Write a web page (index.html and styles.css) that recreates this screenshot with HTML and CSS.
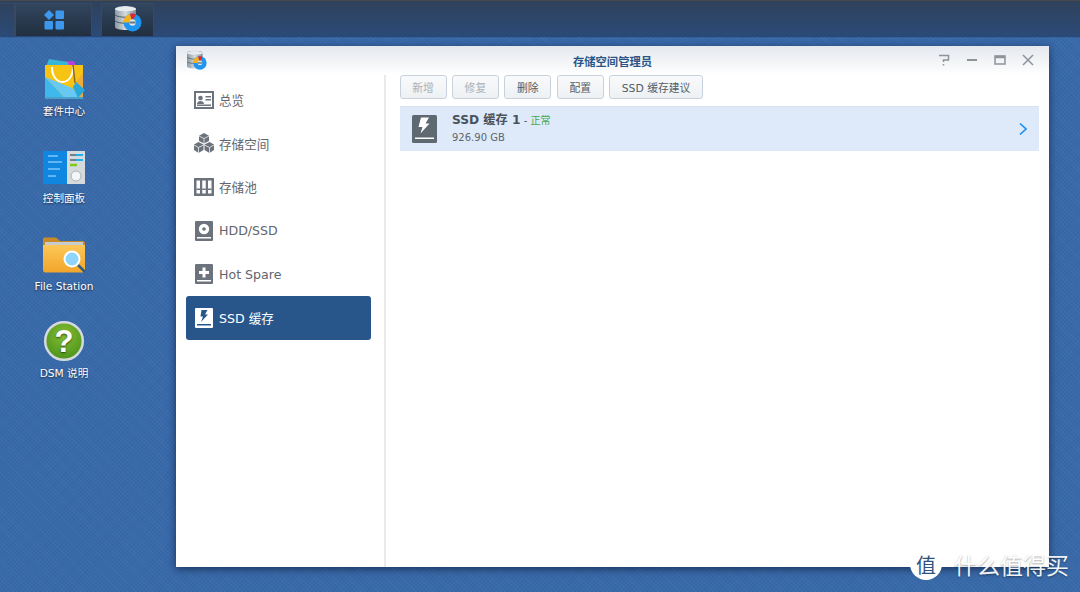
FILE: index.html
```html
<!DOCTYPE html>
<html lang="zh">
<head>
<meta charset="utf-8">
<title>存储空间管理员</title>
<link rel="stylesheet" href="styles.css">
</head>
<body>
<svg class="defs" width="0" height="0">
  <defs>
    <linearGradient id="dbg" x1="0" x2="1" y1="0" y2="0">
      <stop offset="0" stop-color="#8d99a3"/><stop offset=".5" stop-color="#d3dade"/><stop offset="1" stop-color="#7f8b95"/>
    </linearGradient>
    <linearGradient id="folderg" x1="0" x2="0" y1="0" y2="1">
      <stop offset="0" stop-color="#fcc758"/><stop offset="1" stop-color="#f2a52a"/>
    </linearGradient>
    <radialGradient id="helpg" cx=".5" cy=".35" r=".7">
      <stop offset="0" stop-color="#86bd32"/><stop offset="1" stop-color="#47901a"/>
    </radialGradient>
    <g id="dbicon">
      <path d="M0 4C0 0 21 0 21 4V22C21 26 0 26 0 22Z" fill="url(#dbg)"/>
      <path d="M0 4C0 7 21 7 21 4C21 1 0 1 0 4Z" fill="#e6ebee"/>
      <path d="M0 10C4 13 17 13 21 10M0 16C4 19 17 19 21 16" fill="none" stroke="#4f5c66" stroke-width="1"/>
      <circle cx="17.500" cy="17.500" r="9" fill="#1e96f0"/>
      <path d="M8.500 17.500A9 9 0 0 1 15 8.900L16.500 14.500A3 3 0 0 0 14.500 17.500Z" fill="#f5b21c"/>
      <path d="M15 8.800A9 9 0 0 1 21 9.200L18.500 14.500H16.500Z" fill="#e3262a"/>
      <circle cx="17.500" cy="17.500" r="3.200" fill="#dfe5e8"/>
      <rect x="14.500" y="16.500" width="6" height="2" fill="#6d7a84"/>
    </g>
  </defs>
</svg>

<header class="taskbar">
  <div class="task-slot task-spacer"></div>
  <div class="task-slot task-main">
    <svg width="22" height="20" viewBox="0 0 22 20">
      <path d="M6 0L11 5L6 10L1 5Z" fill="#3d97ec"/>
      <rect x="12.500" y="0.500" width="8.500" height="8.500" rx="1" fill="#3d97ec"/>
      <rect x="1.500" y="11" width="8.500" height="8.500" rx="1" fill="#3d97ec"/>
      <rect x="12.500" y="11" width="8.500" height="8.500" rx="1" fill="#3d97ec"/>
    </svg>
  </div>
  <div class="task-slot task-app">
    <svg width="27" height="27" viewBox="0 0 27 27"><use href="#dbicon"/></svg>
  </div>
</header>

<main class="desktop">
  <nav class="shortcuts">
    <a class="shortcut">
      <svg width="44" height="44" viewBox="0 0 44 44">
        <path d="M5 6L32 4L34 10H5Z" fill="#c23be0"/>
        <path d="M5 7L7 2L26 5L27 10H5Z" fill="#38b6d8"/>
        <path d="M3 8H41V42H3Z" fill="#f7c414"/>
        <path d="M3 20L24 42H3Z" fill="#3fb8ee"/>
        <path d="M3 20L30 31L41 42H24Z" fill="#67c8f2"/>
        <path d="M30 31L41 16V42Z" fill="#eeab3c"/>
        <path d="M3 40H41V42H3Z" fill="#4aa0c8"/>
        <path d="M10 10C10 30 31 30 31 10" fill="none" stroke="#fff" stroke-width="2"/>
        <path d="M31 8L33 26" stroke="#8a6a1f" stroke-width="1.500"/>
        <path d="M34 25L43 33L36 41L31 30Z" fill="#27a9dc"/>
      </svg>
      <span>套件中心</span>
    </a>
    <a class="shortcut">
      <svg width="44" height="44" viewBox="0 0 44 44">
        <rect x="1" y="7" width="24" height="33" fill="#0f86e0"/>
        <rect x="25" y="7" width="18" height="33" fill="#d5dadd"/>
        <path d="M6 12H16M6 18H20M6 25H18M6 32H14" stroke="#7cc6f7" stroke-width="1.500"/>
        <path d="M28 11H35M28 16H35M28 21H35" stroke="#56616b" stroke-width="1.500"/>
        <path d="M34 11H41M34 16H41" stroke="#1fb1ee" stroke-width="2"/>
        <path d="M28 21H35" stroke="#7fca1e" stroke-width="2.500"/>
        <circle cx="34" cy="32" r="5" fill="#f4f6f7" stroke="#aab2b8"/>
      </svg>
      <span>控制面板</span>
    </a>
    <a class="shortcut">
      <svg width="44" height="44" viewBox="0 0 44 44">
        <path d="M1 7C1 6 2 5.500 3 5.500H14L18 9H41C42 9 43 10 43 11V16H1Z" fill="#c98a28"/>
        <rect x="3" y="10" width="38" height="6" fill="#c9ccce"/>
        <path d="M1 13H43V38C43 39.500 42 40.500 41 40.500H3C2 40.500 1 39.500 1 38Z" fill="url(#folderg)"/>
        <path d="M36 33L43 40" stroke="#2b5f80" stroke-width="2.500"/>
        <circle cx="30" cy="27" r="7.500" fill="#8fd5fb" stroke="#fff" stroke-width="2"/>
      </svg>
      <span>File Station</span>
    </a>
    <a class="shortcut">
      <svg width="44" height="44" viewBox="0 0 44 44">
        <circle cx="22" cy="22" r="18.800" fill="url(#helpg)" stroke="#d3d9dc" stroke-width="2.500"/>
        <text x="22" y="33" class="help-mark">?</text>
      </svg>
      <span>DSM 说明</span>
    </a>
  </nav>

  <section class="window">
    <header class="titlebar">
      <svg class="title-icon" width="20" height="20" viewBox="0 0 27 27"><use href="#dbicon"/></svg>
      <h1>存储空间管理员</h1>
      <div class="win-controls">
        <svg width="12" height="12" viewBox="0 0 12 12"><path d="M1 1.500H10.500V6H5.500V8M5.500 10V11.500" fill="none" stroke="#8d9399" stroke-width="1.500"/></svg>
        <svg width="12" height="12" viewBox="0 0 12 12"><path d="M1 6H11" stroke="#8d9399" stroke-width="2"/></svg>
        <svg width="12" height="12" viewBox="0 0 12 12"><path d="M1 2H11V10H1Z" fill="none" stroke="#8d9399" stroke-width="1.500"/><path d="M1 3H11" stroke="#8d9399" stroke-width="2.500"/></svg>
        <svg width="12" height="12" viewBox="0 0 12 12"><path d="M1 1L11 11M11 1L1 11" stroke="#8d9399" stroke-width="1.500"/></svg>
      </div>
    </header>
    <div class="window-body">
      <aside class="sidebar">
        <a class="side-item">
          <svg width="20" height="18" viewBox="0 0 20 18"><path fill-rule="evenodd" d="M0 0H20V18H0ZM2 2V16H18V2Z" fill="#6c737c"/><circle cx="6.500" cy="7" r="2.300" fill="#6c737c"/><path d="M3 13C3 9 10 9 10 13ZM11.500 5H17V6.500H11.500ZM11.500 8H17V9.500H11.500ZM3 13.500H17V15H3Z" fill="#6c737c"/></svg>
          <span>总览</span>
        </a>
        <a class="side-item">
          <svg width="20" height="20" viewBox="0 0 20 20"><path d="M10 0L15 2.800V8L10 10.500L5 8V2.800Z" fill="#6c737c"/><path d="M4.500 9L9.500 11.500V17L4.500 20L0 17V11.500Z" fill="#6c737c"/><path d="M15.500 9L20 11.500V17L15.500 20L10.500 17V11.500Z" fill="#6c737c"/><path d="M5 3L10 5.500L15 3M10 5.500V10M0 12L4.500 14.500L9.500 12M4.500 14.500V20M10.500 12L15.500 14.500L20 12M15.500 14.500V20" fill="none" stroke="#fff" stroke-width=".7"/></svg>
          <span>存储空间</span>
        </a>
        <a class="side-item">
          <svg width="20" height="18" viewBox="0 0 20 18"><path fill-rule="evenodd" d="M0 0H20V18H0ZM2.500 2.500V15.500H6V2.500ZM8.250 2.500V15.500H11.750V2.500ZM14 2.500V15.500H17.500V2.500Z" fill="#6c737c"/><path d="M2.500 10.500H6V12H2.500ZM8.250 10.500H11.750V12H8.250ZM14 10.500H17.500V12H14Z" fill="#6c737c"/></svg>
          <span>存储池</span>
        </a>
        <a class="side-item drive">
          <svg width="18" height="20" viewBox="0 0 18 20"><rect width="18" height="20" rx="1" fill="#6c737c"/><circle cx="9" cy="8" r="5.200" fill="#fff"/><circle cx="9" cy="8" r="1.800" fill="#6c737c"/><rect x="2" y="16" width="14" height="1.500" fill="#fff"/></svg>
          <span>HDD/SSD</span>
        </a>
        <a class="side-item drive">
          <svg width="18" height="20" viewBox="0 0 18 20"><rect width="18" height="20" rx="1" fill="#6c737c"/><path d="M7.500 3.500H10.500V7H14V10H10.500V13.500H7.500V10H4V7H7.500Z" fill="#fff"/><rect x="2" y="16" width="14" height="1.500" fill="#fff"/></svg>
          <span>Hot Spare</span>
        </a>
        <a class="side-item drive is-active">
          <svg width="18" height="20" viewBox="0 0 18 20"><rect width="18" height="20" rx="1" fill="#fff"/><path d="M6.500 2H12.500L10 6.500H13L6 14L8 8.500H5.500Z" fill="#28568a"/><rect x="2" y="16" width="14" height="1.500" fill="#28568a"/></svg>
          <span>SSD 缓存</span>
        </a>
      </aside>
      <div class="content">
        <div class="toolbar">
          <button class="btn" disabled>新增</button>
          <button class="btn" disabled>修复</button>
          <button class="btn">删除</button>
          <button class="btn">配置</button>
          <button class="btn btn-wide">SSD 缓存建议</button>
        </div>
        <article class="cache-row">
          <svg width="25" height="28" viewBox="0 0 25 28"><rect width="25" height="28" rx="1.500" fill="#5f6972"/><path d="M9 2.500H17L13.500 8.500H17.500L8.500 18.500L10.500 12H6.500Z" fill="#fff"/><rect x="3" y="22.500" width="19" height="1.500" fill="#fff"/></svg>
          <div class="cache-text">
            <div class="cache-title"><strong>SSD 缓存 1</strong><span class="sep"> - </span><span class="status">正常</span></div>
            <div class="cache-size">926.90 GB</div>
          </div>
          <svg class="chevron" width="8" height="12" viewBox="0 0 8 12"><path d="M1 .500L7 6L1 11.500" fill="none" stroke="#1d8fee" stroke-width="1.600"/></svg>
        </article>
      </div>
    </div>
  </section>

  <div class="watermark">
    <span class="wm-badge">值</span>
    <span class="wm-text">什么值得买</span>
  </div>
</main>
</body>
</html>
```
FILE: styles.css
```css
* { box-sizing: border-box; }
html, body { height: 100%; }
body {
  margin: 0;
  width: 1080px;
  height: 592px;
  overflow: hidden;
  display: flex;
  flex-direction: column;
  font-family: "DejaVu Sans", "Noto Sans CJK SC", sans-serif;
  background-color: #3869a9;
  background-image:
    repeating-linear-gradient(45deg, rgba(255,255,255,.03) 0 1px, transparent 1px 3px),
    repeating-linear-gradient(-45deg, rgba(0,0,0,.03) 0 1px, transparent 1px 3px);
}
.defs { position: absolute; }
.taskbar {
  height: 36px;
  flex: none;
  display: flex;
  padding: 2px 0 0 0;
  gap: 9px;
  background: linear-gradient(#2f425c, #2b4a76);
  border-top: 1px solid #4a4a4c;
  box-shadow: 0 1px 1px rgba(20,40,75,.5);
}
.task-slot {
  height: 33px;
  display: flex;
  align-items: center;
  justify-content: center;
  border: 1px solid #394a60;
  border-bottom: 0;
  background: linear-gradient(#32465f, #222f40);
}
.task-spacer { width: 15px; background: none; border-left: 0; }
.task-main { width: 77px; margin-left: -9px; }
.task-app { width: 53px; }
.task-app svg { margin-top: -3px; margin-left: 2px; }
.desktop { flex: 1; position: relative; }
.shortcuts {
  position: absolute;
  left: 4px;
  top: 21px;
  display: flex;
  flex-direction: column;
  gap: 14px;
}
.shortcut {
  width: 120px;
  height: 73.300px;
  display: flex;
  flex-direction: column;
  align-items: center;
  color: #fff;
  font-size: 10.600px;
  text-shadow: 0 1px 2px rgba(0,0,0,.6);
}
.shortcut span { margin-top: 3px; line-height: 15px; }
.help-mark {
  font: 700 31px "Liberation Sans", sans-serif;
  fill: #fff;
  text-anchor: middle;
}
.window {
  position: absolute;
  left: 176px;
  top: 10px;
  width: 873px;
  height: 521px;
  display: flex;
  flex-direction: column;
  background: #fff;
  box-shadow: 0 2px 8px rgba(10,25,55,.7);
}
.titlebar {
  height: 29px;
  flex: none;
  display: flex;
  align-items: center;
  justify-content: center;
  position: relative;
  background: linear-gradient(#e4e8ee, #fff);
}
.title-icon { position: absolute; left: 11px; top: 4px; }
.titlebar h1 {
  margin: 0;
  font-size: 11.300px;
  font-weight: 700;
  color: #2b5586;
}
.win-controls {
  position: absolute;
  right: 15px;
  top: 8px;
  display: flex;
  gap: 16px;
}
.window-body { flex: 1; display: flex; min-height: 0; }
.sidebar {
  width: 210px;
  flex: none;
  padding: 3px 13px 0 10px;
  border-right: 2px solid #e8eaec;
  display: flex;
  flex-direction: column;
}
.side-item {
  height: 43.600px;
  display: flex;
  align-items: center;
  padding-left: 8px;
  gap: 5px;
  color: #5f666e;
  font-size: 12.600px;
  border-radius: 3px;
}
.side-item svg { flex: none; }
.drive svg { margin: 0 1px; }
.is-active {
  background: #28568a;
  color: #fff;
}
.content { flex: 1; padding: 0 10px 0 13.500px; min-width: 0; }
.toolbar { display: flex; gap: 5.400px; }
.btn {
  width: 47px;
  height: 24px;
  padding: 0;
  border: 1px solid #c8d2dc;
  border-radius: 3px;
  background: linear-gradient(#f8fafb, #eef1f4);
  color: #555d66;
  font: 10.800px "DejaVu Sans", "Noto Sans CJK SC", sans-serif;
}
.btn:disabled { color: #aab0b6; }
.btn-wide { width: 94px; }
.cache-row {
  margin-top: 7px;
  height: 45px;
  display: flex;
  align-items: center;
  padding: 0 12px 0 12.500px;
  background: #deeafa;
  border-top: 1px solid #d8e3f2;
}
.cache-text { flex: 1; margin-left: 15px; }
.cache-title { font-size: 11px; color: #555d66; line-height: 16px; }
.cache-title strong { font-size: 12.200px; color: #4a525b; }
.sep { font-size: 10px; }
.status { color: #41a84a; font-size: 10px; }
.cache-size { font-size: 10px; color: #5f666e; line-height: 16px; margin-top: 1px; }
.watermark {
  position: absolute;
  left: 910px;
  top: 512px;
  display: flex;
  align-items: center;
  gap: 12px;
  color: #fff;
}
.wm-badge {
  width: 32px;
  height: 32px;
  border-radius: 50%;
  background: #fff;
  color: #31547f;
  font: 20px "Noto Sans CJK SC", sans-serif;
  display: flex;
  align-items: center;
  justify-content: center;
}
.wm-text {
  font: 23px/30px "Noto Sans CJK SC", sans-serif;
  text-shadow: 0 1px 2px rgba(0,0,0,.4);
  opacity: .92;
}
```
